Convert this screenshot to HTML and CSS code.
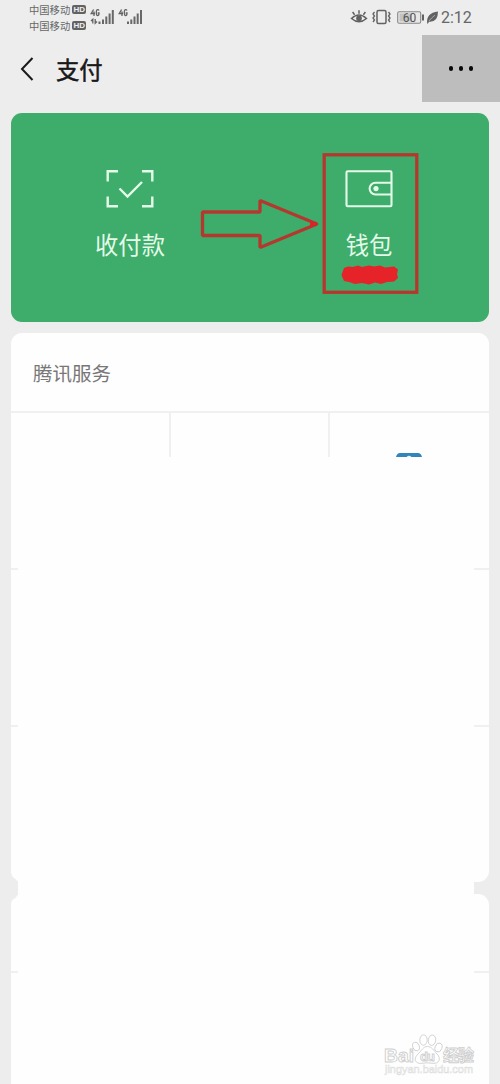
FILE: index.html
```html
<!DOCTYPE html>
<html lang="zh-CN">
<head>
<meta charset="utf-8">
<title>支付</title>
<link rel="stylesheet" href="styles.css">
</head>
<body>
<main class="screen">
  <div class="status">
    <div class="carriers">
      <div class="carrier"><span>中国移动</span><b class="hd">HD</b></div>
      <div class="carrier"><span>中国移动</span><b class="hd">HD</b></div>
    </div>
    <svg class="signals" width="56" height="20" viewBox="0 0 56 20">
      <g fill="none" stroke="#626262" stroke-width="1.300">
        <path d="M3.600 1.500 1.200 5.500H5M4 3.500V8M9 2.600Q8.600 1.700 7.600 1.700Q6.300 1.700 6.300 4.600Q6.300 7.600 7.600 7.600Q9 7.600 9 5H7.700"/>
        <path d="M31.600 1.500 29.200 5.500H33M32 3.500V8M37 2.600Q36.600 1.700 35.600 1.700Q34.300 1.700 34.300 4.600Q34.300 7.600 35.600 7.600Q37 7.600 37 5H35.700"/>
        <path d="M2.800 15.500V11.200L1 13M5.200 11v4.300L7 13.500"/>
      </g>
      <g fill="#686868">
        <path d="M8.500 13.500h2v2.500h-2zM12 11.500h2V16h-2zM15.300 8.500h2V16h-2zM18.600 5.500h2V16h-2zM21.800 2h2v14h-2z"/>
        <path d="M37 13.500h2V16h-2zM40.300 11.500h2V16h-2zM43.500 8.500h2V16h-2zM46.700 5.500h2V16h-2zM50 2h2v14h-2z"/>
      </g>
    </svg>
    <svg class="sysicons" width="90" height="20" viewBox="0 0 90 20">
      <g fill="none" stroke="#626262" stroke-width="1.500">
        <path d="M1.500 10.500Q9 3.500 16.500 10.500Q9 17 1.500 10.500Z"/>
        <circle cx="9" cy="10.300" r="2.100" fill="#626262"/>
        <path d="M9 5.800V2.200M4.600 6.800 2.600 4M13.400 6.800 15.400 4"/>
        <rect x="27" y="2.500" width="9" height="13" rx="1.500"/>
        <path stroke-width="1.300" d="M24.500 4l-1.500 2 1.500 2-1.500 2 1.500 2-1.500 2M38.500 4l1.500 2-1.500 2 1.500 2-1.500 2 1.500 2"/>
      </g>
      <rect x="47.700" y="3.700" width="23" height="11.500" rx="1.500" fill="#e7e7e7" stroke="#888" stroke-width="1.100"/>
      <rect x="49.500" y="5.400" width="12.500" height="8" fill="#c3c3c3"/>
      <text class="battery" x="59.500" y="13.600" text-anchor="middle">60</text>
      <path fill="#626262" d="M72 6.500h2v6h-2zM77.200 15.600Q75.800 5 88 3.500Q88 14.500 79 13.700L77.800 15.800Z"/>
      <path d="M79 13Q81.500 9.500 85 7.200" fill="none" stroke="#d8d8d8" stroke-width=".6"/>
    </svg>
    <span class="clock">2:12</span>
  </div>

  <header class="topbar">
    <svg class="back" width="14" height="26" viewBox="0 0 14 26"><path d="M12.500 2 2 13 12.500 24" fill="none" stroke="#1a1a1a" stroke-width="2"/></svg>
    <h1 class="title">支付</h1>
    <div class="more"><i class="dot"></i><i class="dot"></i><i class="dot"></i></div>
  </header>

  <section class="pay">
    <div class="action">
      <svg width="48" height="40" viewBox="0 0 48 40" fill="none" stroke="#e4fbe9" stroke-width="2.400">
        <path d="M1.700 12.500V2.200H12M36 2.200H46.300V12.500M46.300 27.500V37.300H36M12 37.300H1.700V27.500M13.500 19.500 21.500 27.500 36 13"/>
      </svg>
      <span>收付款</span>
    </div>
    <div class="action">
      <svg width="48" height="40" viewBox="0 0 48 40" fill="none" stroke="#e4fbe9" stroke-width="2.100">
        <rect x="1.500" y="2.200" width="45" height="35" rx="1.200"/>
        <path d="M46.500 13.700H30.500a5.900 5.900 0 0 0 0 11.800H46.500"/>
        <circle cx="31" cy="19.600" r="2.600" fill="#e4fbe9" stroke="none"/>
      </svg>
      <span>钱包</span>
    </div>
    <svg class="marks" width="478" height="209" viewBox="0 0 478 209">
      <g fill="none" stroke="#b5382f" stroke-width="3.300">
        <rect x="313.200" y="41.800" width="92.600" height="137.500"/>
        <path stroke-linejoin="bevel" d="M191.500 99H249V87.500L306 111 249 134.500V122.500H191.500Z"/>
      </g>
      <path d="M299 107.500 308 111 299 114.500Z" fill="#d92527"/>
      <path fill="#e52329" d="M333 155L337 153.500L342 154L347 152.500L351 154L358 152.500L363 153.500L369 152.500L374 154.500L383 153.500L387 156.500L386 161L387 165L383 168.500L376 169L370 171L364 169.500L358 171.500L351 170L344 171L338 169L333 168L330.500 162Z"/>
    </svg>
  </section>

  <div class="lists">
    <section class="card services">
      <h2 class="heading">腾讯服务</h2>
      <div class="grid">
        <div class="cell"></div><div class="cell"></div>
        <div class="cell"><svg class="glimpse" width="26" height="5" viewBox="0 0 26 5"><path d="M0 5Q1 1 4 1H22Q25 1 26 5Z" fill="#3285bb"/><path d="M10.500 5Q13 2.500 15.500 5Z" fill="#e5f4fc"/></svg></div>
        <div class="cell"></div><div class="cell"></div><div class="cell"></div>
        <div class="cell"></div><div class="cell"></div><div class="cell"></div>
      </div>
    </section>
    <section class="card second"><div class="subhead"></div></section>
    <div class="cover"></div>
    <div class="notch"></div>
    <svg class="watermark" width="100" height="48" viewBox="0 0 100 48">
      <g fill="#fff" stroke="#cfcfcf" stroke-width=".9">
        <ellipse cx="39" cy="16.500" rx="3.200" ry="4.500" transform="rotate(-20 39 16.500)"/>
        <ellipse cx="46.500" cy="10" rx="3.700" ry="5.200"/>
        <ellipse cx="55" cy="10.200" rx="3.700" ry="5.200" transform="rotate(8 55 10.200)"/>
        <ellipse cx="61.500" cy="17.500" rx="3.400" ry="4.600" transform="rotate(20 61.500 17.500)"/>
        <path d="M50.500 16.500C46 16.500 44.500 21 41 24C35.500 29 39 34 44 33.300Q50 32.300 56 33.300C62 34 64.500 28.500 60 24C56.500 20.500 55 16.500 50.500 16.500Z"/>
        <text class="wm-latin" x="7" y="31.500" textLength="30" lengthAdjust="spacingAndGlyphs">Bai</text>
        <text class="wm-du" x="43" y="30.500" textLength="15">du</text>
        <text class="wm-cjk" x="66" y="31" textLength="31">经验</text>
        <text class="wm-url" x="8" y="43" textLength="88" lengthAdjust="spacingAndGlyphs">jingyan.baidu.com</text>
      </g>
    </svg>
  </div>
</main>
</body>
</html>
```
FILE: styles.css
```css
* { box-sizing: border-box; }
body {
  margin: 0;
  font-family: "Liberation Sans", "Noto Sans CJK SC", sans-serif;
  background: #ededed;
}
svg { display: block; flex: none; }
.screen {
  display: flex;
  flex-direction: column;
  width: 500px;
  height: 1084px;
  overflow: hidden;
  background: #ededed;
}
.status {
  display: flex;
  flex: none;
  height: 35px;
  padding-left: 29px;
  color: #666;
}
.carriers { width: 61px; padding-top: 2px; }
.carrier {
  display: flex;
  align-items: center;
  gap: 2px;
  height: 15.500px;
  font: 10.300px/15px "Noto Sans CJK SC", sans-serif;
  white-space: nowrap;
}
.hd {
  width: 14px;
  height: 9px;
  border-radius: 2px;
  background: #626262;
  color: #eee;
  font: bold 8px/9px "Liberation Sans", sans-serif;
  text-align: center;
}
.signals { margin-top: 8px; }
.sysicons { margin: 8px 0 0 204px; }
.battery { font: 12px Roboto, sans-serif; fill: #555; }
.clock {
  margin-left: 1px;
  padding-top: 8px;
  font: 16px/20px Roboto, sans-serif;
  white-space: nowrap;
}
.topbar {
  display: flex;
  flex: none;
  align-items: center;
  height: 67px;
  padding-left: 20px;
}
.title {
  margin: 0 0 0 22px;
  color: #191919;
  font: 400 23.300px/34px "Noto Sans CJK SC", sans-serif;
  -webkit-text-stroke: .5px #191919;
}
.more {
  display: flex;
  align-items: center;
  justify-content: center;
  gap: 5.500px;
  width: 78px;
  height: 67px;
  margin-left: auto;
  background: #bdbdbd;
}
.dot { width: 4.300px; height: 4.300px; border-radius: 50%; background: #080808; }
.pay {
  position: relative;
  display: grid;
  flex: none;
  grid-template-columns: 1fr 1fr;
  height: 209px;
  margin: 11px 11px 0;
  border-radius: 11px;
  background: #3eac6a;
}
.action {
  display: flex;
  flex-direction: column;
  align-items: center;
  gap: 18px;
  padding: 56px 1px 0 0;
  color: #e4fbe9;
  font: 23.300px/34px "Noto Sans CJK SC", sans-serif;
}
.marks { position: absolute; inset: 0; }
.lists {
  position: relative;
  display: flex;
  flex: 1;
  flex-direction: column;
  gap: 12px;
  min-height: 0;
  padding: 11px 11px 0;
}
.card { flex: none; border-radius: 11px; background: #fefefe; }
.services { height: 549px; }
.heading {
  height: 80px;
  margin: 0;
  padding: 26px 22px 0;
  border-bottom: 2px solid #f0f0f0;
  color: #777;
  font: 400 19.500px/28px "Noto Sans CJK SC", sans-serif;
}
.grid { display: grid; grid-template-columns: 160px 159px 159px; grid-auto-rows: 157px; }
.cell { border-right: 2px solid #f0f0f0; border-bottom: 2px solid #f0f0f0; }
.cell:nth-child(3n) { border-right: 0; }
.cell:nth-child(n + 7) { border-bottom: 0; }
.glimpse { margin: 39px 0 0 66px; }
.second { height: 220px; border-radius: 11px 11px 0 0; }
.subhead { height: 79px; border-bottom: 2px solid #f0f0f0; }
.cover {
  position: absolute;
  top: 135px;
  right: 26px;
  bottom: 0;
  left: 18px;
  background: #fefefe;
}
.notch {
  position: absolute;
  top: 555px;
  left: 10px;
  width: 8px;
  height: 23px;
  border-radius: 0 8px 8px 0;
  background: #ededed;
}
.watermark { position: absolute; right: 23px; bottom: 6px; }
.wm-latin { font: bold 19px "Liberation Sans", sans-serif; }
.wm-du { font: bold 13px "Liberation Sans", sans-serif; }
.wm-cjk { font: bold 16px "Noto Sans CJK SC", sans-serif; }
.wm-url { font: 11px "Liberation Sans", sans-serif; stroke: #dedede; stroke-width: .6px; }
```
